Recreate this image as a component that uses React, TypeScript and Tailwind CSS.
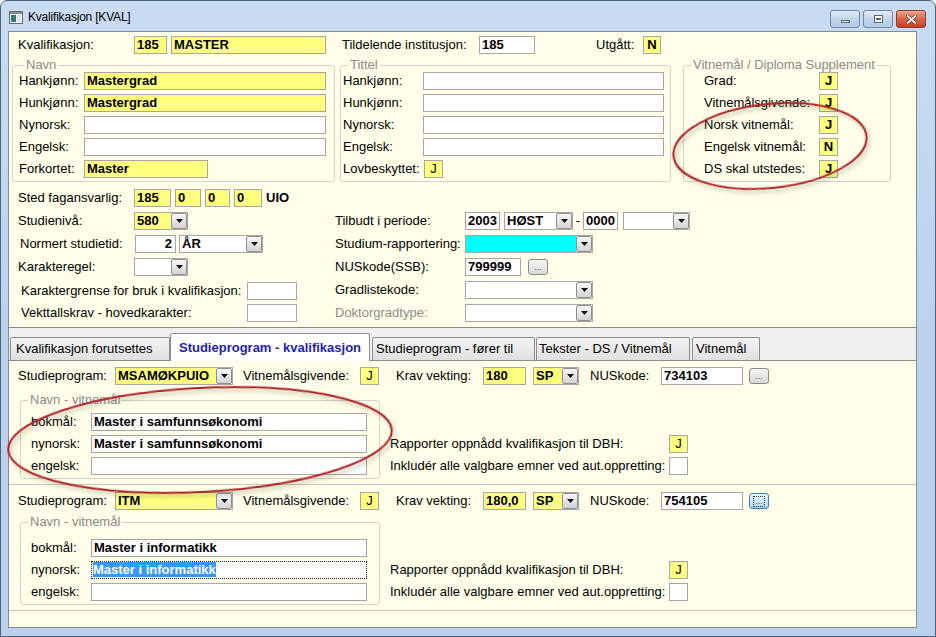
import React from 'react';

const YEL = 'bg-[#ffff80]';

type FieldProps = {
  w: string;
  v?: string;
  bg?: string;
  bold?: boolean;
  align?: 'left' | 'center' | 'right';
  cls?: string;
};

function Field({ w, v = '', bg = 'bg-white', bold = true, align = 'left', cls = '' }: FieldProps) {
  const al = align === 'center' ? 'text-center' : align === 'right' ? 'text-right pr-[3px]' : 'pl-[2px]';
  return (
    <div
      className={`${w} ${bg} ${bold ? 'font-bold' : ''} ${al} h-[18px] shrink-0 overflow-hidden whitespace-nowrap border border-[#a6a6a6] leading-[16px] ${cls}`}
    >
      {v}
    </div>
  );
}

function DropBtn() {
  return (
    <div className="flex h-[16px] w-[16px] shrink-0 items-center justify-center rounded-[2px] border border-[#8f8f8f] bg-gradient-to-b from-[#f7f7f7] to-[#d4d4d4]">
      <svg width="7" height="4" viewBox="0 0 7 4">
        <path d="M0 0h7L3.5 4z" fill="#111" />
      </svg>
    </div>
  );
}

function Combo({ w, v = '', bg = 'bg-white' }: { w: string; v?: string; bg?: string }) {
  return (
    <div className={`${w} flex h-[18px] shrink-0 border border-[#a6a6a6] bg-white`}>
      <div className={`${bg} flex-1 overflow-hidden whitespace-nowrap pl-[2px] font-bold leading-[16px]`}>{v}</div>
      <DropBtn />
    </div>
  );
}

function DotBtn({ focused = false }: { focused?: boolean }) {
  return (
    <div
      className={`flex h-[16px] w-[20px] shrink-0 items-end justify-center rounded-[3px] border ${
        focused ? 'border-[#3c7fb1] bg-gradient-to-b from-[#eaf6fd] to-[#a9dbf6]' : 'border-[#8a8a8a] bg-gradient-to-b from-[#f4f4f4] to-[#dadada]'
      }`}
    >
      <span className={`mb-[2px] text-[9px] leading-[9px] text-[#555] ${focused ? 'outline-1 outline-dotted outline-[#333] px-[1px]' : ''}`}>...</span>
    </div>
  );
}

function Lbl({ w, t, cls = '' }: { w: string; t: string; cls?: string }) {
  return <div className={`${w} shrink-0 whitespace-nowrap leading-[18px] ${cls}`}>{t}</div>;
}

function Group({ w, h, legend, legendLeft, children, cls = '' }: { w: string; h: string; legend: string; legendLeft: string; children: React.ReactNode; cls?: string }) {
  return (
    <div className={`${w} ${h} relative shrink-0 rounded-[3px] border border-[#d3d3cd] ${cls}`}>
      <span className={`absolute -top-[9px] ${legendLeft} bg-[#ffffea] px-[2px] leading-[15px] text-[#8a8a8a]`}>{legend}</span>
      {children}
    </div>
  );
}

function Tab({ w, label, pl = 'pl-[3px]', ml = '' }: { w: string; label: string; pl?: string; ml?: string }) {
  return (
    <div className={`${w} ${pl} ${ml} flex h-[23px] shrink-0 items-center rounded-t-[2px] border border-b-0 border-[#8d8d8d] bg-gradient-to-b from-[#f4f4f4] to-[#e0e0e0] whitespace-nowrap`}>
      {label}
    </div>
  );
}

type RecProps = {
  h: string;
  rowMt: string;
  fsMt: string;
  fsPt: string;
  rightPt: string;
  prog: string;
  vekt: string;
  nus: string;
  focus?: boolean;
  bokmal: string;
  nynorsk: string;
};

function Record({ h, rowMt, fsMt, fsPt, rightPt, prog, vekt, nus, focus, bokmal, nynorsk }: RecProps) {
  return (
    <div className={`${h} shrink-0 border-b border-[#c8c8c0]`}>
      <div className={`${rowMt} ml-[9px] flex h-[18px] items-center`}>
        <Lbl w="w-[97px]" t="Studieprogram:" />
        <Combo w="w-[118px]" v={prog} bg={YEL} />
        <Lbl w="w-[117px]" cls="ml-[10px]" t="Vitnemålsgivende:" />
        <Field w="w-[19px]" v="J" bg={YEL} bold={false} align="center" />
        <Lbl w="w-[87px]" cls="ml-[17px]" t="Krav vekting:" />
        <Field w="w-[43px]" v={vekt} bg={YEL} />
        <div className="ml-[7px]">
          <Combo w="w-[46px]" v="SP" bg={YEL} />
        </div>
        <Lbl w="w-[71px]" cls="ml-[11px]" t="NUSkode:" />
        <Field w="w-[82px]" v={nus} />
        <div className="ml-[6px]">
          <DotBtn focused={focus} />
        </div>
      </div>
      <div className={`${fsMt} ml-[11px] flex items-start`}>
        <Group w="w-[360px]" h="" legend="Navn - vitnemål" legendLeft="left-[7px]" cls={`${fsPt} pb-[3px] pl-[10px]`}>
          <div className="flex flex-col gap-[4px]">
            <div className="flex h-[18px]">
              <Lbl w="w-[60px]" t="bokmål:" />
              <Field w="w-[276px]" v={bokmal} />
            </div>
            <div className="flex h-[18px]">
              <Lbl w="w-[60px]" t="nynorsk:" />
              {focus ? (
                <div className="h-[18px] w-[276px] shrink-0 border border-dotted border-[#222] bg-white pl-[1px] font-bold leading-[16px]">
                  <span className="bg-[#3399ff] text-white">{nynorsk}</span>
                </div>
              ) : (
                <Field w="w-[276px]" v={nynorsk} />
              )}
            </div>
            <div className="flex h-[18px]">
              <Lbl w="w-[60px]" t="engelsk:" />
              <Field w="w-[276px]" />
            </div>
          </div>
        </Group>
        <div className={`${rightPt} ml-[10px] flex flex-col gap-[4px]`}>
          <div className="flex h-[18px]">
            <Lbl w="w-[279px]" t="Rapporter oppnådd kvalifikasjon til DBH:" />
            <Field w="w-[19px]" v="J" bg={YEL} bold={false} align="center" />
          </div>
          <div className="flex h-[18px]">
            <Lbl w="w-[279px]" t="Inkludér alle valgbare emner ved aut.oppretting:" />
            <Field w="w-[19px]" />
          </div>
        </div>
      </div>
    </div>
  );
}

export default function App() {
  return (
    <div className="relative h-[637px] w-[936px] overflow-hidden bg-white font-['Liberation_Sans',Arial,sans-serif] text-[13px] text-black">
      <div className="flex h-full w-full flex-col rounded-t-[7px] border border-[#4d627c] bg-gradient-to-b from-[#cadcf2] via-[#bdd3ec] to-[#bcd2ec]">
        {/* title bar */}
        <div className="flex h-[30px] shrink-0 items-start">
          <svg className="ml-[8px] mt-[10px]" width="14" height="13" viewBox="0 0 14 13">
            <rect x="0.5" y="0.5" width="13" height="12" fill="#f2f2f2" stroke="#6b6b6b" />
            <rect x="1" y="1" width="12" height="2" fill="#8a8a8a" />
            <rect x="2" y="4" width="5" height="7" fill="#2f7d78" />
            <rect x="8" y="4" width="4" height="7" fill="#dfe6ea" />
          </svg>
          <div className="ml-[5px] mt-[9px] text-[12px] leading-[15px] tracking-[-0.2px] text-black">Kvalifikasjon [KVAL]</div>
          <div className="ml-auto mr-[9px] mt-[9px] flex gap-[3px]">
            <div className="flex h-[18px] w-[30px] items-center justify-center rounded-[3px] border border-[#6c86a8] bg-gradient-to-b from-[#e3edf8] via-[#c2d5ec] to-[#b4cae6]">
              <div className="mt-[5px] h-[3px] w-[9px] border border-[#56677c] bg-white" />
            </div>
            <div className="flex h-[18px] w-[30px] items-center justify-center rounded-[3px] border border-[#6c86a8] bg-gradient-to-b from-[#e3edf8] via-[#c2d5ec] to-[#b4cae6]">
              <div className="flex h-[8px] w-[9px] items-center justify-center border border-[#56677c] bg-white">
                <div className="h-[2px] w-[5px] bg-[#56677c]" />
              </div>
            </div>
            <div className="flex h-[18px] w-[30px] items-center justify-center rounded-[3px] border border-[#8c3a2c] bg-gradient-to-b from-[#eba48f] via-[#d9654a] to-[#c93f25]">
              <svg width="11" height="9" viewBox="0 0 11 9">
                <path d="M1.5 1l8 7M9.5 1l-8 7" stroke="#4a1a12" strokeWidth="3" strokeLinecap="round" />
                <path d="M1.5 1l8 7M9.5 1l-8 7" stroke="#fff" strokeWidth="1.8" strokeLinecap="round" />
              </svg>
            </div>
          </div>
        </div>

        {/* client area */}
        <div className="flex flex-1 pb-[8px] pl-[7px] pr-[18px]">
          <div className="flex flex-1 flex-col border border-[#7f8c9c] bg-[#ffffea]">
            {/* upper panel */}
            <div className="h-[296px] shrink-0 border-b border-[#8a8a8a]">
              <div className="ml-[9px] mt-[4px] flex h-[18px] items-center">
                <Lbl w="w-[116px]" t="Kvalifikasjon:" />
                <Field w="w-[33px]" v="185" bg={YEL} />
                <Field w="w-[155px]" cls="ml-[4px]" v="MASTER" bg={YEL} />
                <Lbl w="w-[137px]" cls="ml-[16px]" t="Tildelende institusjon:" />
                <Field w="w-[56px]" v="185" />
                <Lbl w="w-[47px]" cls="ml-[61px]" t="Utgått:" />
                <Field w="w-[18px]" v="N" bg={YEL} align="center" />
              </div>

              <div className="ml-[3px] mt-[11px] flex items-start">
                <Group w="w-[323px]" h="h-[117px]" legend="Navn" legendLeft="left-[11px]" cls="pl-[6px] pt-[6px]">
                  <div className="flex flex-col gap-[4px]">
                    <div className="flex"><Lbl w="w-[65px]" t="Hankjønn:" /><Field w="w-[242px]" v="Mastergrad" bg={YEL} /></div>
                    <div className="flex"><Lbl w="w-[65px]" t="Hunkjønn:" /><Field w="w-[242px]" v="Mastergrad" bg={YEL} /></div>
                    <div className="flex"><Lbl w="w-[65px]" t="Nynorsk:" /><Field w="w-[242px]" /></div>
                    <div className="flex"><Lbl w="w-[65px]" t="Engelsk:" /><Field w="w-[242px]" /></div>
                    <div className="flex"><Lbl w="w-[65px]" t="Forkortet:" /><Field w="w-[124px]" v="Master" bg={YEL} /></div>
                  </div>
                </Group>
                <Group w="w-[331px]" h="h-[117px]" legend="Tittel" legendLeft="left-[7px]" cls="ml-[5px] pl-[2px] pt-[6px]">
                  <div className="flex flex-col gap-[4px]">
                    <div className="flex"><Lbl w="w-[80px]" t="Hankjønn:" /><Field w="w-[241px]" /></div>
                    <div className="flex"><Lbl w="w-[80px]" t="Hunkjønn:" /><Field w="w-[241px]" /></div>
                    <div className="flex"><Lbl w="w-[80px]" t="Nynorsk:" /><Field w="w-[241px]" /></div>
                    <div className="flex"><Lbl w="w-[80px]" t="Engelsk:" /><Field w="w-[241px]" /></div>
                    <div className="flex"><Lbl w="w-[81px]" t="Lovbeskyttet:" /><Field w="w-[19px]" v="J" bg={YEL} bold={false} align="center" /></div>
                  </div>
                </Group>
                <Group w="w-[208px]" h="h-[117px]" legend="Vitnemål / Diploma Supplement" legendLeft="left-[7px]" cls="ml-[12px] pl-[20px] pt-[6px]">
                  <div className="flex flex-col gap-[4px]">
                    <div className="flex"><Lbl w="w-[115px]" t="Grad:" /><Field w="w-[19px]" v="J" bg={YEL} align="center" /></div>
                    <div className="flex"><Lbl w="w-[115px]" t="Vitnemålsgivende:" /><Field w="w-[19px]" v="J" bg={YEL} align="center" /></div>
                    <div className="flex"><Lbl w="w-[115px]" t="Norsk vitnemål:" /><Field w="w-[19px]" v="J" bg={YEL} align="center" /></div>
                    <div className="flex"><Lbl w="w-[115px]" t="Engelsk vitnemål:" /><Field w="w-[19px]" v="N" bg={YEL} align="center" /></div>
                    <div className="flex"><Lbl w="w-[115px]" t="DS skal utstedes:" /><Field w="w-[19px]" v="J" bg={YEL} align="center" /></div>
                  </div>
                </Group>
              </div>

              <div className="ml-[9px] mt-[7px] flex items-start">
                {/* left column */}
                <div className="flex w-[317px] shrink-0 flex-col">
                  <div className="flex h-[18px] items-center">
                    <Lbl w="w-[116px]" t="Sted fagansvarlig:" />
                    <Field w="w-[37px]" v="185" bg={YEL} />
                    <Field w="w-[26px]" cls="ml-[4px]" v="0" bg={YEL} />
                    <Field w="w-[25px]" cls="ml-[4px]" v="0" bg={YEL} />
                    <Field w="w-[28px]" cls="ml-[4px]" v="0" bg={YEL} />
                    <span className="ml-[4px] font-bold">UIO</span>
                  </div>
                  <div className="mt-[5px] flex h-[18px]">
                    <Lbl w="w-[116px]" t="Studienivå:" />
                    <Combo w="w-[54px]" v="580" bg={YEL} />
                  </div>
                  <div className="mt-[5px] flex h-[18px]">
                    <Lbl w="w-[115px]" cls="ml-[2px]" t="Normert studietid:" />
                    <Field w="w-[41px]" v="2" align="right" />
                    <div className="ml-[3px]"><Combo w="w-[84px]" v="ÅR" /></div>
                  </div>
                  <div className="mt-[5px] flex h-[18px]">
                    <Lbl w="w-[116px]" t="Karakteregel:" />
                    <Combo w="w-[54px]" />
                  </div>
                  <div className="mt-[6px] flex h-[18px]">
                    <Lbl w="w-[226px]" cls="ml-[3px]" t="Karaktergrense for bruk i kvalifikasjon:" />
                    <Field w="w-[50px]" />
                  </div>
                  <div className="mt-[4px] flex h-[18px]">
                    <Lbl w="w-[226px]" cls="ml-[3px]" t="Vekttallskrav - hovedkarakter:" />
                    <Field w="w-[50px]" />
                  </div>
                </div>
                {/* right column */}
                <div className="mt-[23px] flex flex-col">
                  <div className="flex h-[18px]">
                    <Lbl w="w-[130px]" t="Tilbudt i periode:" />
                    <Field w="w-[35px]" v="2003" />
                    <div className="ml-[4px]"><Combo w="w-[69px]" v="HØST" /></div>
                    <div className="w-[10px] text-center leading-[18px]">-</div>
                    <Field w="w-[35px]" v="0000" />
                    <div className="ml-[5px]"><Combo w="w-[67px]" /></div>
                  </div>
                  <div className="mt-[5px] flex h-[18px]">
                    <Lbl w="w-[130px]" t="Studium-rapportering:" />
                    <Combo w="w-[128px]" bg="bg-[#00ffff]" />
                  </div>
                  <div className="mt-[5px] flex h-[18px] items-center">
                    <Lbl w="w-[130px]" t="NUSkode(SSB):" />
                    <Field w="w-[56px]" v="799999" />
                    <div className="ml-[7px]"><DotBtn /></div>
                  </div>
                  <div className="mt-[5px] flex h-[18px]">
                    <Lbl w="w-[130px]" t="Gradlistekode:" />
                    <Combo w="w-[128px]" />
                  </div>
                  <div className="mt-[5px] flex h-[18px]">
                    <Lbl w="w-[130px]" cls="text-[#8d8d8d]" t="Doktorgradtype:" />
                    <Combo w="w-[128px]" />
                  </div>
                </div>
              </div>
            </div>

            {/* tab strip */}
            <div className="flex h-[33px] shrink-0 items-end border-b border-[#8d8d8d] bg-[#f0f0f0] pl-[1px]">
              <Tab w="w-[160px]" pl="pl-[5px]" label="Kvalifikasjon forutsettes" />
              <div className="relative -mb-[1px] flex h-[28px] w-[200px] shrink-0 items-start justify-center rounded-t-[2px] border border-b-0 border-[#8d8d8d] bg-white pt-[4px] font-bold text-[#1e1eb4]">
                Studieprogram - kvalifikasjon
              </div>
              <Tab w="w-[163px]" ml="ml-[2px]" label="Studieprogram - fører til" />
              <Tab w="w-[154px]" ml="ml-[1px]" pl="pl-[2px]" label="Tekster - DS / Vitnemål" />
              <Tab w="w-[68px]" ml="ml-[2px]" label="Vitnemål" />
            </div>

            {/* tab content */}
            <div className="flex flex-1 flex-col">
              <Record
                h="h-[124px]"
                rowMt="mt-[6px]"
                fsMt="mt-[15px]"
                fsPt="pt-[12px]"
                rightPt="pt-[35px]"
                prog="MSAMØKPUIO"
                vekt="180"
                nus="734103"
                bokmal="Master i samfunnsøkonomi"
                nynorsk="Master i samfunnsøkonomi"
              />
              <Record
                h="h-[126px]"
                rowMt="mt-[7px]"
                fsMt="mt-[12px]"
                fsPt="pt-[16px]"
                rightPt="pt-[39px]"
                prog="ITM"
                vekt="180,0"
                nus="754105"
                focus
                bokmal="Master i informatikk"
                nynorsk="Master i informatikk"
              />
            </div>
          </div>
        </div>
      </div>

      {/* hand-drawn annotation ellipses */}
      <svg className="pointer-events-none absolute left-0 top-0" width="936" height="637" viewBox="0 0 936 637">
        <defs>
          <filter id="sh" x="-20%" y="-20%" width="140%" height="140%">
            <feDropShadow dx="2" dy="3" stdDeviation="2" floodColor="#5e6b45" floodOpacity="0.45" />
          </filter>
        </defs>
        <ellipse cx="770" cy="146" rx="97" ry="42" transform="rotate(-6 770 146)" fill="none" stroke="#b0232a" strokeWidth="2" filter="url(#sh)" />
        <ellipse cx="200" cy="440" rx="192" ry="52" transform="rotate(-3 200 440)" fill="none" stroke="#b0232a" strokeWidth="2" filter="url(#sh)" />
      </svg>
    </div>
  );
}
